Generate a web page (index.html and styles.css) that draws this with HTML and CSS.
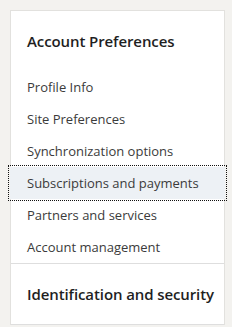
FILE: index.html
```html
<!DOCTYPE html>
<html lang="en">
<head>
  <meta charset="UTF-8">
  <meta name="viewport" content="width=device-width, initial-scale=1.0">
  <title>Settings</title>
  <link rel="stylesheet" href="styles.css">
</head>
<body>
  <div class="panel">
    <div class="section">
      <h2 class="section-title">Account Preferences</h2>
      <ul class="menu">
        <li class="menu-item">Profile Info</li>
        <li class="menu-item">Site Preferences</li>
        <li class="menu-item">Synchronization options</li>
        <li class="menu-item active">Subscriptions and payments</li>
        <li class="menu-item">Partners and services</li>
        <li class="menu-item">Account management</li>
      </ul>
    </div>
    <div class="section">
      <h2 class="section-title">Identification and security</h2>
    </div>
  </div>
</body>
</html>
```

FILE: styles.css
```css
* {
  box-sizing: border-box;
  margin: 0;
  padding: 0;
}

body {
  background: #f3f2ef;
  font-family: 'Open Sans', sans-serif;
  padding: 10px 7px 0 10px;
}

.panel {
  background: #fff;
  border: 1px solid #e2e1de;
  border-bottom: none;
  width: 215px;
}

.section {
  border-bottom: 1px solid #dedede;
}

.section-title {
  height: 60px;
  display: flex;
  align-items: center;
  padding-left: 16px;
  font-size: 15px;
  font-weight: 600;
  color: #1f1f1f;
  letter-spacing: -0.1px;
}

.menu {
  list-style: none;
}

.menu-item {
  height: 32px;
  display: flex;
  align-items: center;
  padding-left: 16px;
  font-size: 13px;
  color: #3b3b3b;
  cursor: pointer;
}

.menu-item.active {
  background: #edf1f5;
  outline: 1px dotted #111;
  outline-offset: 1px;
  margin: 0 -1px;
  padding-left: 17px;
}
```
